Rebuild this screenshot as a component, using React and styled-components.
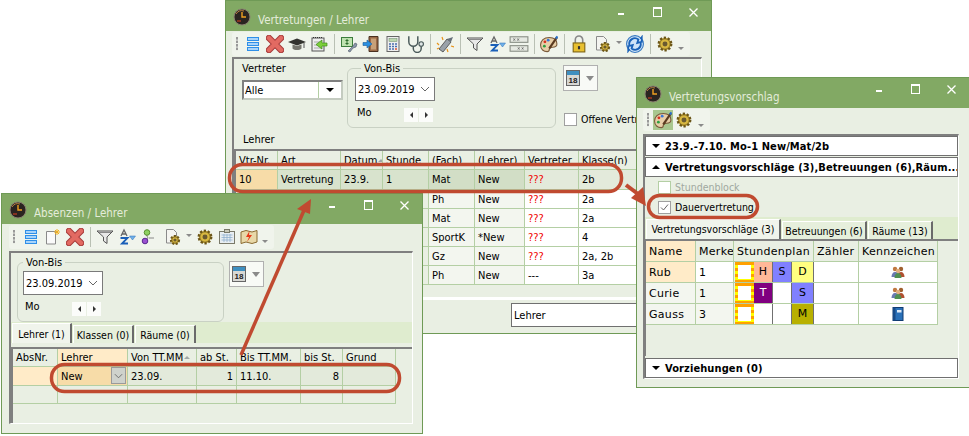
import React from 'react';
import styled, { createGlobalStyle } from 'styled-components';

const Global = createGlobalStyle`
  html, body { margin: 0; padding: 0; background: #fff; }
  body { font-family: "DejaVu Sans", "Liberation Sans", sans-serif; font-size: 11px; color: #000; }
`;

const Desktop = styled.div`
  position: relative;
  width: 969px;
  height: 436px;
  overflow: hidden;
  background: #fff;
`;

// ---------- window chrome ----------
const Win = styled.section`
  position: absolute;
  left: ${p => p.$x}px;
  top: ${p => p.$y}px;
  width: ${p => p.$w}px;
  height: ${p => p.$h}px;
  box-sizing: border-box;
  display: flex;
  flex-direction: column;
  background: #e9efe3;
  border: 1px solid #6f9a56;
  z-index: ${p => p.$z};
`;
const TitleBar = styled.header`
  flex: none;
  height: ${p => p.$h || 30}px;
  display: flex;
  background: #82a964;
  color: #e4ecda;
  font-stretch: condensed;
  font-family: "DejaVu Sans", sans-serif;
  font-size: 11.5px;
`;
const TitleIcon = styled.div`
  width: 32px;
  padding: 7px 0 0 7px;
  box-sizing: border-box;
`;
const TitleText = styled.div`
  padding-top: 12px;
`;
const Caption = styled.div`
  margin-left: auto;
  display: flex;
`;
const CapBtn = styled.div`
  width: 36px;
  height: 22px;
  display: flex;
  align-items: center;
  justify-content: center;
`;
const CapMin = styled.span`
  width: 6px;
  height: 2px;
  margin-top: 4px;
  background: #fff;
`;
const CapMax = styled.span`
  width: 7px;
  height: 7px;
  border: 1px solid #fff;
  border-top-width: 2px;
`;
const CapClose = styled.svg`
  width: 9px;
  height: 9px;
`;

const Toolbar = styled.div`
  flex: none;
  align-self: flex-start;
  height: ${p => p.$h || 24}px;
  margin: 1px 0 0 ${p => p.$ml || 6}px;
  padding-right: ${p => p.$pr || 6}px;
  display: flex;
  align-items: center;
  background: #f0f4ec;
  border-radius: 3px;
`;
const Grip = styled.div`
  width: 10px;
  height: 14px;
  margin-right: ${p => p.$mr || 0}px;
  background: radial-gradient(circle at 5px 1.500px, #999 1.200px, transparent 1.300px) 0 0 / 10px 3.500px repeat-y;
`;
const ToolBtn = styled.div`
  width: ${p => p.$w || 22}px;
  height: ${p => (p.$on ? 20 : 22)}px;
  display: flex;
  align-items: center;
  justify-content: ${p => (p.$w > 22 ? 'flex-start' : 'center')};
  padding-left: ${p => (p.$w > 22 ? 4 : 0)}px;
  box-sizing: border-box;
  background: ${p => (p.$on ? '#a9c78f' : 'transparent')};
`;
const Sep = styled.div`
  width: 1px;
  height: 20px;
  margin: 0 ${p => p.$m || 3.5}px;
  background: #b9c0b4;
`;
const Drop = styled.span`
  width: 0;
  height: 0;
  margin: ${p => p.$top || 0}px 0 0 ${p => p.$ml || 5}px;
  border: 3px solid transparent;
  border-top: 3px solid #8a8a8a;
  border-bottom: 0;
`;

const Ico = styled.svg`
  width: ${p => p.$s || 18}px;
  height: ${p => p.$s || 18}px;
  display: block;
  flex: none;
`;

// ---------- icons ----------
const Clock = () => (
  <Ico viewBox="0 0 18 18"><circle cx="9" cy="9" r="8" fill="#2a2420" stroke="#8a8070" /><path d="M3 6a7 7 0 0 1 8-3" stroke="#b98040" fill="none" /><path d="M9 4v5h4" stroke="#f0a020" strokeWidth="1.400" fill="none" /><path d="M4 13h4" stroke="#e04020" /></Ico>
);
const ListI = () => (
  <Ico viewBox="0 0 18 18"><g fill="#a8d4fb" stroke="#2f8fe8"><rect x="3.500" y="2.500" width="11" height="3" /><rect x="3.500" y="7.500" width="11" height="3" /><rect x="3.500" y="12.500" width="11" height="3" /></g></Ico>
);
const XI = () => (
  <Ico viewBox="0 0 18 18"><path d="M3 3l12 12M15 3L3 15" stroke="#a83c3c" strokeWidth="6.500" strokeLinecap="round" /><path d="M3 3l12 12M15 3L3 15" stroke="#e26a62" strokeWidth="4.500" strokeLinecap="round" /></Ico>
);
const Cap = () => (
  <Ico viewBox="0 2 18 14"><path d="M0 7l9-3.500L18 7l-9 3.500z" fill="#33332f" /><path d="M4.500 9.500v4c2 2 7 2 9 0v-4L9 11z" fill="#77776f" /><path d="M16 8v5" stroke="#555" /></Ico>
);
const CalArrow = () => (
  <Ico viewBox="0 0 18 18"><rect x="2" y="3" width="12" height="13" fill="#eee" stroke="#555" /><path d="M3 2.500h10" stroke="#333" strokeDasharray="1 1" /><path d="M4 7h8M4 10h8M4 13h8" stroke="#aaa" /><path d="M17 8h-5V5l-6 4.500 6 4.500v-3h5z" fill="#7ccf3a" stroke="#3f8a1a" strokeWidth=".7" /></Ico>
);
const Money = () => (
  <Ico viewBox="0 0 18 18"><rect x="1.500" y="2.500" width="11" height="9" fill="#bfe2b0" stroke="#3d7d3d" /><path d="M7 4v6M5.500 5.500h3M5.500 8.500h3" stroke="#2d6d2d" /><path d="M8 16l5-5 2-3 2 1-1 3-3 1-3 4z" fill="#8a96a8" stroke="#4d5868" strokeWidth=".6" /></Ico>
);
const Door = () => (
  <Ico viewBox="0 0 18 18"><path d="M7 1.500h9v15H7z" fill="#9a6a48" stroke="#4a3020" /><path d="M9 3.500h5v11H9z" fill="#c8a078" /><path d="M1 7.500h4V5l5 4-5 4v-2.500H1z" fill="#2a8fe0" stroke="#1a5a98" strokeWidth=".6" /></Ico>
);
const Calc = () => (
  <Ico viewBox="0 0 18 18"><rect x="3" y="1.500" width="12" height="15" fill="#efefef" stroke="#666" /><rect x="5" y="3.500" width="8" height="3" fill="#bcd8b0" stroke="#6a8a6a" strokeWidth=".5" /><path d="M5 9h2M8 9h2M11 9h2M5 11.500h2M8 11.500h2M11 11.500h2M5 14h2M8 14h2" stroke="#4a6fb0" strokeWidth="1.500" /><path d="M11 14h2" stroke="#e05030" strokeWidth="1.500" /></Ico>
);
const Stetho = () => (
  <Ico viewBox="1 1 15 16"><path d="M3 2v5a4 4 0 0 0 8 0V2M7 11v2a3.500 3.500 0 0 0 7 0v-2" stroke="#4a5a5a" strokeWidth="1.300" fill="none" /><circle cx="14" cy="9" r="2" fill="#dfe6e6" stroke="#4a5a5a" /></Ico>
);
const Plug = () => (
  <Ico viewBox="0 0 18 18"><path d="M3 14L11 4l4 3-8 10z" fill="#9aa2aa" stroke="#444" strokeWidth=".8" /><path d="M11 4l4 3 2-5z" fill="#66707a" /><path d="M1 8l2 2M6 2l1 3M15 11l3 1M11 14l1 3M1 14l2-1" stroke="#e8941a" strokeWidth="1.200" /></Ico>
);
const Funnel = () => (
  <Ico viewBox="0 0 18 18"><path d="M1 3h16l-6 6v6.500L7.500 13V9z" fill="#e8e8e8" stroke="#555" /><path d="M3 4.500h12" stroke="#8a8a8a" /></Ico>
);
const AZ = () => (
  <Ico viewBox="0 0 18 18"><path d="M3 8l3-6 3 6M4 6h4" stroke="#666" strokeWidth="1.300" fill="none" /><path d="M2.500 10h7L4 15.500h6" stroke="#1a5fb8" strokeWidth="1.800" fill="none" /><path d="M11.500 8h6L14.500 12z" fill="#6fb0e8" stroke="#2a6fb8" strokeWidth=".5" /></Ico>
);
const XXGrid = () => (
  <Ico viewBox="0 0 18 18" $s={20}><g fill="#e6e9e2" stroke="#8a8f86"><rect x="1" y="2.500" width="16" height="5" /><rect x="1" y="10.500" width="16" height="5" /></g><path d="M4 4l1.500 2M5.500 4L4 6M7.500 4L9 6M9 4L7.500 6M8 12l1.500 2M9.500 12L8 14M11.500 12l1.500 2M13 12l-1.500 2" stroke="#555" strokeWidth=".6" /></Ico>
);
const Palette = () => (
  <Ico viewBox="0.500 1 16.500 16"><path d="M9 3C4 3 1 6 1 10s3 6 6 6c2 0 2-1 2-2s1-2 3-2 4-1 4-3c0-4-3-6-7-6z" fill="#e8cfa8" stroke="#7a5a3a" /><circle cx="5" cy="7" r="1.300" fill="#d83020" /><circle cx="8" cy="5.500" r="1.300" fill="#3a78d8" /><circle cx="4.500" cy="11" r="1.300" fill="#2fa040" /><path d="M9 13L16 3" stroke="#5a3a20" strokeWidth="2" /><path d="M15 4l1.500-2" stroke="#2a70c8" strokeWidth="2" /></Ico>
);
const Lock = () => (
  <Ico viewBox="1 0.500 16 17"><path d="M5.500 8V5a3.500 3.500 0 0 1 7 0v3" stroke="#888" strokeWidth="1.500" fill="none" /><rect x="3.500" y="8" width="11" height="8.500" fill="#e8c030" stroke="#7a6010" /><path d="M9 11v3" stroke="#333" strokeWidth="2" /></Ico>
);
const GearPath = ({ x = 9, y = 9, r = 5.500 }) => (
  <g>
    <circle cx={x} cy={y} r={r} fill="#c8a838" stroke="#6a5518" strokeWidth="2.200" strokeDasharray="2 1.450" />
    <circle cx={x} cy={y} r={r - 1} fill="#d8b840" stroke="#7a6420" strokeWidth=".6" />
    <circle cx={x} cy={y} r={r / 2.500} fill="#6a5a30" />
  </g>
);
const Gear = () => <Ico viewBox="1 1 16 16"><GearPath /></Ico>;
const DocGear = () => (
  <Ico viewBox="0 0 18 18"><path d="M2.500 1.500h7l3 3V15h-10z" fill="#f4f4f0" stroke="#8a8a8a" /><GearPath x={11} y={12} r={4} /></Ico>
);
const Refresh = () => (
  <Ico viewBox="1 1 16 16"><circle cx="9" cy="9" r="7.500" fill="#cfe4f8" stroke="#3a7ac0" /><path d="M4 10a5 5 0 0 1 8-5l-1 3 4-1V3l-1 1.500" stroke="#1a62b8" strokeWidth="1.600" fill="none" /><path d="M14 8a5 5 0 0 1-8 5l1-3-4 1v4l1-1.500" stroke="#1a62b8" strokeWidth="1.600" fill="none" /></Ico>
);
const NewDoc = () => (
  <Ico viewBox="0 0 18 18"><path d="M2.500 3.500h9V16h-9z" fill="#fafafa" stroke="#8a8a8a" /><path d="M13 1v6M10 4h6M11 2l4 4M15 2l-4 4" stroke="#f0b020" /></Ico>
);
const Dots = () => (
  <Ico viewBox="0 0 18 18"><path d="M6 6l2 4-2 3M9 10h5" stroke="#888" fill="none" /><circle cx="7" cy="4.500" r="2.800" fill="#8ed060" stroke="#5a9030" /><circle cx="5" cy="13" r="2.800" fill="#9a50d0" stroke="#5a2a90" /></Ico>
);
const Clip = () => (
  <Ico viewBox="0 0 18 18"><rect x="1.500" y="3.500" width="15" height="12" fill="#e8eef2" stroke="#7a7a6a" /><rect x="6.500" y="1.500" width="5" height="3" fill="#c8c8b8" stroke="#7a7a6a" /><path d="M3.500 7h11M3.500 9.500h11M3.500 12h11M6 6v8M9 6v8M12 6v8" stroke="#88aacc" strokeWidth=".7" /></Ico>
);
const MapI = () => (
  <Ico viewBox="0 0 18 18"><path d="M1 4l5-1.500 6 1.500 5-1.500V14l-5 1.500L6 14l-5 1.500z" fill="#e8d8a8" stroke="#8a6a30" /><path d="M9.500 3L6 9h3l-2 5 5-7H9z" fill="#e83818" /></Ico>
);
const CalBig = () => (
  <Ico viewBox="0 0 14 16" $s={16}><rect x=".5" y=".5" width="13" height="15" fill="#d8d8d4" stroke="#666" /><rect x="1" y="1" width="12" height="4" fill="#3f8fc0" /><text x="7" y="12.500" fontSize="8" fontWeight="700" textAnchor="middle" fontFamily="Liberation Sans" fill="#222">18</text></Ico>
);
const People = () => (
  <Ico viewBox="0 0 14 14" $s={14}><circle cx="4" cy="4" r="2.200" fill="#c07840" /><circle cx="10" cy="4" r="2.200" fill="#a06030" /><circle cx="7" cy="6" r="2.200" fill="#e0b080" /><path d="M.5 12c0-3 1.500-5 3.500-5s3 1 3 5z" fill="#6a7ab0" /><path d="M7 12c0-3 1-5 3-5s3.500 2 3.500 5z" fill="#b05030" /><path d="M3.500 13c0-3 1.500-5 3.500-5s3.500 2 3.500 5z" fill="#509050" /></Ico>
);
const Book = () => (
  <Ico viewBox="0 0 12 14" $s={14}><rect x="1" y=".5" width="10" height="13" fill="#2a70b8" stroke="#103a70" /><rect x="1" y=".5" width="2.500" height="13" fill="#174a88" /><rect x="5" y="3" width="4.500" height="2.500" fill="#dfeaf6" /></Ico>
);

// ---------- panels / form parts ----------
const Panel = styled.div`
  flex: none;
  box-sizing: border-box;
  margin: ${p => p.$m};
  height: ${p => p.$h}px;
  border-top: 2px solid #7f7f7f;
  border-left: 2px solid #7f7f7f;
  border-right: 1px solid #fff;
  border-bottom: 1px solid #fff;
  display: flex;
  flex-direction: column;
`;
const FormRow = styled.div`
  display: flex;
  align-items: flex-start;
  padding: ${p => p.$pad};
`;
const Label = styled.div`
  font-stretch: condensed;
  line-height: 13px;
  padding: ${p => p.$pad || 0};
`;
const Combo = styled.div`
  width: 101px;
  height: 20px;
  margin-top: 5px;
  box-sizing: border-box;
  border: 2px solid #c4cbc0;
  border-top-color: #808080;
  border-left-color: #808080;
  background: #fff;
  display: flex;
  align-items: center;
  padding-left: 1px;
  font-stretch: condensed;
`;
const ComboBtn = styled.div`
  margin-left: auto;
  width: 22px;
  height: 16px;
  border-left: 1px solid #b4cfa4;
  display: flex;
  align-items: center;
  justify-content: center;
  &::after {
    content: "";
    border: 4px solid transparent;
    border-top: 4px solid #000;
    border-bottom: 0;
  }
`;
const Group = styled.fieldset`
  margin: ${p => p.$m || 0};
  padding: 2px 0 0 ${p => p.$pl || 7}px;
  width: ${p => p.$w || 209}px;
  height: 66px;
  box-sizing: border-box;
  border: 1px solid #c9d1c4;
  border-radius: 6px;
  legend {
    margin-left: ${p => p.$lm || 0}px;
    padding: 0 3px;
    font-stretch: condensed;
    line-height: 13px;
  }
`;
const DateBox = styled.div`
  width: 80px;
  height: 24px;
  box-sizing: border-box;
  border: 1px solid #7a7a7a;
  background: #fff;
  display: flex;
  align-items: center;
  justify-content: space-between;
  padding: 0 4px 0 2px;
  font-stretch: condensed;
  svg { width: 10px; height: 6px; }
`;
const DayRow = styled.div`
  display: flex;
  align-items: flex-start;
  width: 78px;
  box-sizing: border-box;
  padding: 5px 0 0 2px;
  justify-content: space-between;
  font-stretch: condensed;
`;
const Spin = styled.div`
  display: flex;
  gap: 1px;
  margin: 2px 0 0 0;
`;
const SpinBtn = styled.div`
  width: 14px;
  height: 14px;
  background: #fbfcfa;
  display: flex;
  align-items: center;
  justify-content: center;
  &::after {
    content: "";
    border: 3px solid transparent;
    ${p => (p.$left ? 'border-right: 3px solid #333; border-left: 0;' : 'border-left: 3px solid #333; border-right: 0;')}
  }
`;
const CalBtn = styled.div`
  width: 35px;
  height: 26px;
  margin: ${p => p.$m};
  box-sizing: border-box;
  border: 1px solid #b0b0b0;
  background: #f8faf6;
  display: flex;
  align-items: center;
  padding-left: 1px;
  gap: 5px;
  &::after {
    content: "";
    border: 4.500px solid transparent;
    border-top: 5px solid #8a8a8a;
    border-bottom: 0;
    margin-top: 1px;
  }
`;
const Check = styled.span`
  width: 11px;
  height: 11px;
  flex: none;
  background: #fff;
  border: 1px solid ${p => (p.$dim ? '#b4cfa4' : '#a0a0a0')};
  display: flex;
  align-items: center;
  justify-content: center;
`;
const CheckRow = styled.div`
  display: flex;
  align-items: center;
  gap: 4px;
  height: 20px;
  padding-left: ${p => p.$pl || 0}px;
  color: ${p => (p.$dim ? '#a0a8a0' : '#000')};
  font-stretch: condensed;
  font-size: 10.5px;
  white-space: nowrap;
  margin: ${p => p.$m || 0};
`;

// ---------- tabs ----------
const TabBand = styled.div`
  display: flex;
  align-items: flex-end;
  height: ${p => p.$h || 20}px;
  padding-left: ${p => p.$pl || 1}px;
  margin: ${p => p.$m || 0};
  background: #dfeccf;
`;
const Tab = styled.div`
  height: ${p => (p.$on ? 20 : 18)}px;
  width: ${p => p.$w}px;
  box-sizing: border-box;
  margin-right: 1px;
  padding-bottom: ${p => p.$lift || 0}px;
  display: flex;
  align-items: center;
  justify-content: center;
  background: ${p => (p.$on ? '#f0f4ec' : '#e6efdc')};
  border: 1px solid #fff;
  border-bottom: 0;
  border-right: 2px solid #6a6a6a;
  font-stretch: condensed;
  font-size: 10.5px;
  white-space: nowrap;
  overflow: hidden;
`;

// ---------- grids ----------
const Grid = styled.div`
  flex: ${p => (p.$fill ? 1 : 'none')};
  margin: ${p => p.$m || 0};
  box-sizing: border-box;
  border-top: 2px solid #7f7f7f;
  border-left: 2px solid #7f7f7f;
  overflow: hidden;
`;
const Row = styled.div`
  display: flex;
  height: ${p => p.$h}px;
`;
const Cell = styled.div`
  flex: none;
  position: relative;
  width: ${p => p.$w}px;
  box-sizing: border-box;
  padding: 0 ${p => p.$pr || 3}px 0 3px;
  display: flex;
  align-items: center;
  justify-content: ${p => (p.$center ? 'center' : p.$end ? 'flex-end' : 'flex-start')};
  background: ${p => p.$bg || 'transparent'};
  color: ${p => p.$color || '#000'};
  border-right: 1px solid #b4cfa4;
  border-bottom: 1px solid #b4cfa4;
  white-space: nowrap;
  overflow: hidden;
  font-stretch: ${p => (p.$wide ? 'normal' : 'condensed')};
  letter-spacing: ${p => (p.$wide ? '0.3px' : '0')};
`;
const SortMark = styled.span`
  margin-left: 1px;
  border: 3px solid transparent;
  border-bottom: 3px solid #a0a8a8;
  border-top: 0;
`;
const CellDrop = styled.div`
  position: absolute;
  right: 1px;
  top: 0;
  width: 15px;
  height: 17px;
  background: #cfd2cc;
  border: 1px solid #9a9a9a;
  box-sizing: border-box;
  display: flex;
  align-items: center;
  justify-content: center;
  svg { width: 9px; height: 6px; }
`;
const Plan = styled.div`
  width: 80px;
  flex: none;
  display: flex;
  border-bottom: 1px solid #b4cfa4;
`;
const Slot = styled.div`
  flex: none;
  box-sizing: border-box;
  width: ${p => p.$w}px;
  display: flex;
  align-items: flex-start;
  justify-content: center;
  padding-top: 3px;
  background: ${p => p.$bg || '#fff'};
  color: ${p => p.$color || '#000'};
  border-right: 1px solid #707070;
`;
const MarkSlot = styled.div`
  flex: none;
  width: 19px;
  box-sizing: border-box;
  margin-left: 1px;
  border: 3px solid transparent;
  background: repeating-linear-gradient(#ffa000 0 3px, #ffff00 3px 6px) border-box;
  box-shadow: inset 0 0 0 20px #fff;
`;
const Footer = styled.div`
  display: flex;
  justify-content: flex-end;
`;
const Divider = styled.div`
  height: 2px;
  margin-top: 12px;
  border-top: 1px solid #fff;
  border-bottom: 1px solid #fff;
`;
const LehrerInput = styled.div`
  width: 190px;
  height: 24px;
  margin: 4px 0 0 0;
  box-sizing: border-box;
  background: #fff;
  border: 1px solid #707070;
  border-right: 0;
  display: flex;
  align-items: center;
  padding-left: 2px;
  font-stretch: condensed;
`;
const Fold = styled.div`
  height: ${p => p.$h || 20}px;
  margin: ${p => p.$m || 0};
  box-sizing: border-box;
  border: 1px solid #707070;
  background: #fff;
  display: flex;
  align-items: center;
  gap: 5px;
  padding-left: 6px;
  font-weight: 700;
  font-size: 11px;
  font-stretch: condensed;
  white-space: nowrap;
  overflow: hidden;
  letter-spacing: 0.1px;
  &::before {
    content: "";
    flex: none;
    border: 4px solid transparent;
    ${p => (p.$up
      ? 'border-bottom: 4px solid #000; border-top: 0;'
      : 'border-top: 4px solid #000; border-bottom: 0;')}
  }
`;
const Overlay = styled.svg`
  position: absolute;
  left: 0;
  top: 0;
  z-index: 10;
  pointer-events: none;
`;

const Chevron = () => (
  <svg viewBox="0 0 10 6"><path d="M1 1l4 4 4-4" stroke="#666" fill="none" /></svg>
);

function TitleRow({ children, h }) {
  return (
    <TitleBar $h={h}>
      <TitleIcon><Clock /></TitleIcon>
      <TitleText>{children}</TitleText>
      <Caption>
        <CapBtn><CapMin /></CapBtn>
        <CapBtn><CapMax /></CapBtn>
        <CapBtn>
          <CapClose viewBox="0 0 9 9"><path d="M.5.5l8 8M8.500.5l-8 8" stroke="#fff" strokeWidth="1.300" /></CapClose>
        </CapBtn>
      </Caption>
    </TitleBar>
  );
}

function DateGroup({ m, w, pl, lm }) {
  return (
    <Group $m={m} $w={w} $pl={pl} $lm={lm}>
      <legend>Von-Bis</legend>
      <DateBox>23.09.2019<Chevron /></DateBox>
      <DayRow>
        Mo
        <Spin><SpinBtn $left /><SpinBtn /></Spin>
      </DayRow>
    </Group>
  );
}

const vColumns = [42, 63, 42, 46, 46, 50, 54, 70];
const vRows = [
  ['', '', '', '', 'Ph', 'New', '???', '2a'],
  ['', '', '', '', 'Mat', 'New', '???', '2a'],
  ['', '', '', '', 'SportK', '*New', '???', '4'],
  ['', '', '', '', 'Gz', 'New', '???', '2a, 2b'],
  ['', '', '', '', 'Ph', 'New', '---', '3a'],
];

function SubstitutionWindow() {
  const head = ['Vtr-Nr.', 'Art', 'Datum', 'Stunde', '(Fach)', '(Lehrer)', 'Vertreter', 'Klasse(n)'];
  const sel = ['10', 'Vertretung', '23.9.', '1', 'Mat', 'New', '???', '2b'];
  const selBg = ['#f7dca8', '#d8e3cd', '#d8e3cd', '#d8e3cd', '#d2dec6', '#d2dec6', '#e3eadb', '#e3eadb'];
  return (
    <Win $x={225} $y={0} $w={487} $h={334} $z={1}>
      <TitleRow>Vertretungen / Lehrer</TitleRow>
      <Toolbar>
        <Grip />
        <ToolBtn><ListI /></ToolBtn><ToolBtn><XI /></ToolBtn><ToolBtn><Cap /></ToolBtn><ToolBtn><CalArrow /></ToolBtn>
        <Sep />
        <ToolBtn><Money /></ToolBtn><ToolBtn><Door /></ToolBtn><ToolBtn><Calc /></ToolBtn><ToolBtn><Stetho /></ToolBtn>
        <Sep />
        <ToolBtn><Plug /></ToolBtn>
        <Sep />
        <ToolBtn><Funnel /></ToolBtn><ToolBtn><AZ /></ToolBtn><ToolBtn><XXGrid /></ToolBtn>
        <Sep />
        <ToolBtn><Palette /></ToolBtn>
        <Sep />
        <ToolBtn><Lock /></ToolBtn>
        <ToolBtn $w={34}><DocGear /><Drop $ml={4} $top={-4} /></ToolBtn>
        <ToolBtn><Refresh /></ToolBtn>
        <Sep />
        <ToolBtn><Gear /></ToolBtn>
        <Drop $top={8} $ml={2} />
      </Toolbar>
      <Panel $m="1px 9px 0 6px" $h={243}>
        <FormRow $pad="3px 0 0 8px">
          <div>
            <Label>Vertreter</Label>
            <Combo>Alle<ComboBtn /></Combo>
          </div>
          <DateGroup m="0 0 0 4px" pl={7} lm={6} />
          <div>
            <CalBtn $m="3px 0 0 7px"><CalBig /></CalBtn>
            <CheckRow $pl={8} $m="18px 0 0 0"><Check />Offene Vertretungen</CheckRow>
          </div>
        </FormRow>
        <Label $pad="4px 0 0 9px">Lehrer</Label>
        <Grid $m="3px 0 0 0">
          <Row $h={19}>{head.map((h, i) => <Cell key={h} $w={vColumns[i]}>{h}{h === 'Datum' && <SortMark />}</Cell>)}</Row>
          <Row $h={20}>{sel.map((t, i) => <Cell key={i} $w={vColumns[i]} $bg={selBg[i]} $color={t === '???' ? '#f00000' : undefined}>{t}</Cell>)}</Row>
          {vRows.map((r, n) => (
            <Row $h={19} key={n}>
              {r.map((t, i) => <Cell key={i} $w={vColumns[i]} $bg={i > 3 ? (i > 5 ? '#fff' : '#f3f6ef') : undefined} $color={t === '???' ? '#f00000' : undefined}>{t}</Cell>)}
            </Row>
          ))}
        </Grid>
        <Divider />
        <Footer><LehrerInput>Lehrer</LehrerInput></Footer>
      </Panel>
    </Win>
  );
}

const aColumns = [45, 70, 69, 40, 64, 42, 53];

function AbsenceWindow() {
  const head = ['AbsNr.', 'Lehrer', 'Von TT.MM', 'ab St.', 'Bis TT.MM.', 'bis St.', 'Grund'];
  return (
    <Win $x={1} $y={193} $w={422} $h={241} $z={3}>
      <TitleRow>Absenzen / Lehrer</TitleRow>
      <Toolbar $ml={7}>
        <Grip $mr={1} />
        <ToolBtn><ListI /></ToolBtn><ToolBtn><NewDoc /></ToolBtn><ToolBtn><XI /></ToolBtn>
        <Sep />
        <ToolBtn><Funnel /></ToolBtn><ToolBtn><AZ /></ToolBtn><ToolBtn><Dots /></ToolBtn>
        <ToolBtn $w={34}><DocGear /><Drop $ml={4} $top={-4} /></ToolBtn>
        <ToolBtn><Gear /></ToolBtn><ToolBtn><Clip /></ToolBtn><ToolBtn><MapI /></ToolBtn>
        <Drop $top={8} $ml={2} />
      </Toolbar>
      <Panel $m="2px 9px 0 7px" $h={173}>
        <FormRow $pad="3px 0 0 6px">
          <DateGroup w={207} pl={5} />
          <CalBtn $m="5px 0 0 5px"><CalBig /></CalBtn>
        </FormRow>
        <TabBand $h={21}>
          <Tab $on $w={60}>Lehrer (1)</Tab>
          <Tab $w={61}>Klassen (0)</Tab>
          <Tab $w={61}>Räume (0)</Tab>
        </TabBand>
        <Grid $fill $m="4px 0 0 0">
          <Row $h={18}>
            {head.map((h, i) => <Cell key={h} $w={aColumns[i]} $bg={i === 1 ? '#ffebc8' : undefined}>{h}{i === 2 && <SortMark />}</Cell>)}
          </Row>
          <Row $h={19}>
            <Cell $w={45} $bg="#ffebc8" />
            <Cell $w={70} $bg="#f7dca8">New<CellDrop><Chevron /></CellDrop></Cell>
            <Cell $w={69} $bg="#e3eadb">23.09.</Cell>
            <Cell $w={40} $bg="#e3eadb" $end>1</Cell>
            <Cell $w={64} $bg="#e3eadb">11.10.</Cell>
            <Cell $w={42} $bg="#e3eadb" $end>8</Cell>
            <Cell $w={53} $bg="#e3eadb" />
          </Row>
          <Row $h={18}>{aColumns.map((w, i) => <Cell key={i} $w={w} />)}</Row>
        </Grid>
      </Panel>
    </Win>
  );
}

const plan = [
  { name: 'Rub', m: '1', slots: [['H', '#ffb898'], ['S', '#8080ff'], ['D', '#ffff80']], flag: <People /> },
  { name: 'Curie', m: '1', slots: [['T', '#800080', '#fff'], ['', '#fff'], ['S', '#8080ff']], flag: <People /> },
  { name: 'Gauss', m: '3', slots: [['', '#fff'], ['', '#fff'], ['M', '#b8b000']], flag: <Book /> },
];

function ProposalWindow() {
  return (
    <Win $x={636} $y={77} $w={334} $h={311} $z={5}>
      <TitleRow>Vertretungsvorschlag</TitleRow>
      <Toolbar $h={22} $ml={6} $pr={0}>
        <Grip />
        <ToolBtn $on $w={20}><Palette /></ToolBtn>
        <ToolBtn><Gear /></ToolBtn>
        <Drop $top={10} $ml={3} />
      </Toolbar>
      <Panel $m="3px 10px 0 6px" $h={245}>
        <Fold>23.9.-7.10. Mo-1 New/Mat/2b</Fold>
        <Fold $up $m="1px 0 0 0">Vertretungsvorschläge (3),Betreuungen (6),Räum...</Fold>
        <CheckRow $dim $pl={13}><Check $dim />Stundenblock</CheckRow>
        <CheckRow $pl={13}>
          <Check>
            <svg width="9" height="9" viewBox="0 0 9 9"><path d="M1 4.500l2.500 2.500L8 1.500" stroke="#666" fill="none" /></svg>
          </Check>
          Dauervertretung
        </CheckRow>
        <TabBand $h={22} $pl={1}>
          <Tab $on $w={135} $lift={2}>Vertretungsvorschläge (3)</Tab>
          <Tab $w={85}>Betreuungen (6)</Tab>
          <Tab $w={65}>Räume (13)</Tab>
        </TabBand>
        <Grid $fill $m="0 0 0 -1px">
          <Row $h={21}>
            <Cell $wide $w={50} $bg="#ffebc8">Name</Cell>
            <Cell $wide $w={38}>Merke</Cell>
            <Cell $wide $w={80}>Stundenplan</Cell>
            <Cell $wide $w={45}>Zähler</Cell>
            <Cell $wide $w={79}>Kennzeichen</Cell>
          </Row>
          {plan.map((r, i) => (
            <Row $h={21} key={r.name}>
              <Cell $wide $w={50} $bg={i === 0 ? '#ffebc8' : '#f3f6ef'}>{r.name}</Cell>
              <Cell $wide $w={38} $bg={i === 0 ? '#fff' : '#f3f6ef'}>{r.m}</Cell>
              <Plan>
                <MarkSlot />
                <Slot $w={19} $bg={r.slots[0][1]} $color={r.slots[0][2]}>{r.slots[0][0]}</Slot>
                <Slot $w={19} $bg={r.slots[1][1]}>{r.slots[1][0]}</Slot>
                <Slot $w={22} $bg={r.slots[2][1]}>{r.slots[2][0]}</Slot>
              </Plan>
              <Cell $w={45} $bg="#fff" />
              <Cell $w={79} $bg="#fff" $center>{r.flag}</Cell>
            </Row>
          ))}
        </Grid>
        <Fold $h={20} $m="2px 0 0 0">Vorziehungen (0)</Fold>
      </Panel>
    </Win>
  );
}

function Annotations() {
  const red = '#c04a30';
  return (
    <Overlay width="969" height="436" viewBox="0 0 969 436" fill="none">
      <rect x="229.500" y="164.500" width="392" height="27" rx="13" stroke={red} strokeWidth="3.500" />
      <rect x="51.500" y="364.500" width="348" height="27" rx="13" stroke={red} strokeWidth="3.500" />
      <rect x="648.500" y="195.500" width="109" height="22" rx="11" stroke={red} strokeWidth="3.500" />
      <path d="M241 355L305 208" stroke={red} strokeWidth="3.500" />
      <path d="M311 199L297 209L310 214Z" fill={red} />
      <path d="M626 185L638 194" stroke={red} strokeWidth="4" />
      <path d="M646 206L631 198L643 187Z" fill={red} />
    </Overlay>
  );
}

export default function App() {
  return (
    <Desktop>
      <Global />
      <SubstitutionWindow />
      <AbsenceWindow />
      <ProposalWindow />
      <Annotations />
    </Desktop>
  );
}
